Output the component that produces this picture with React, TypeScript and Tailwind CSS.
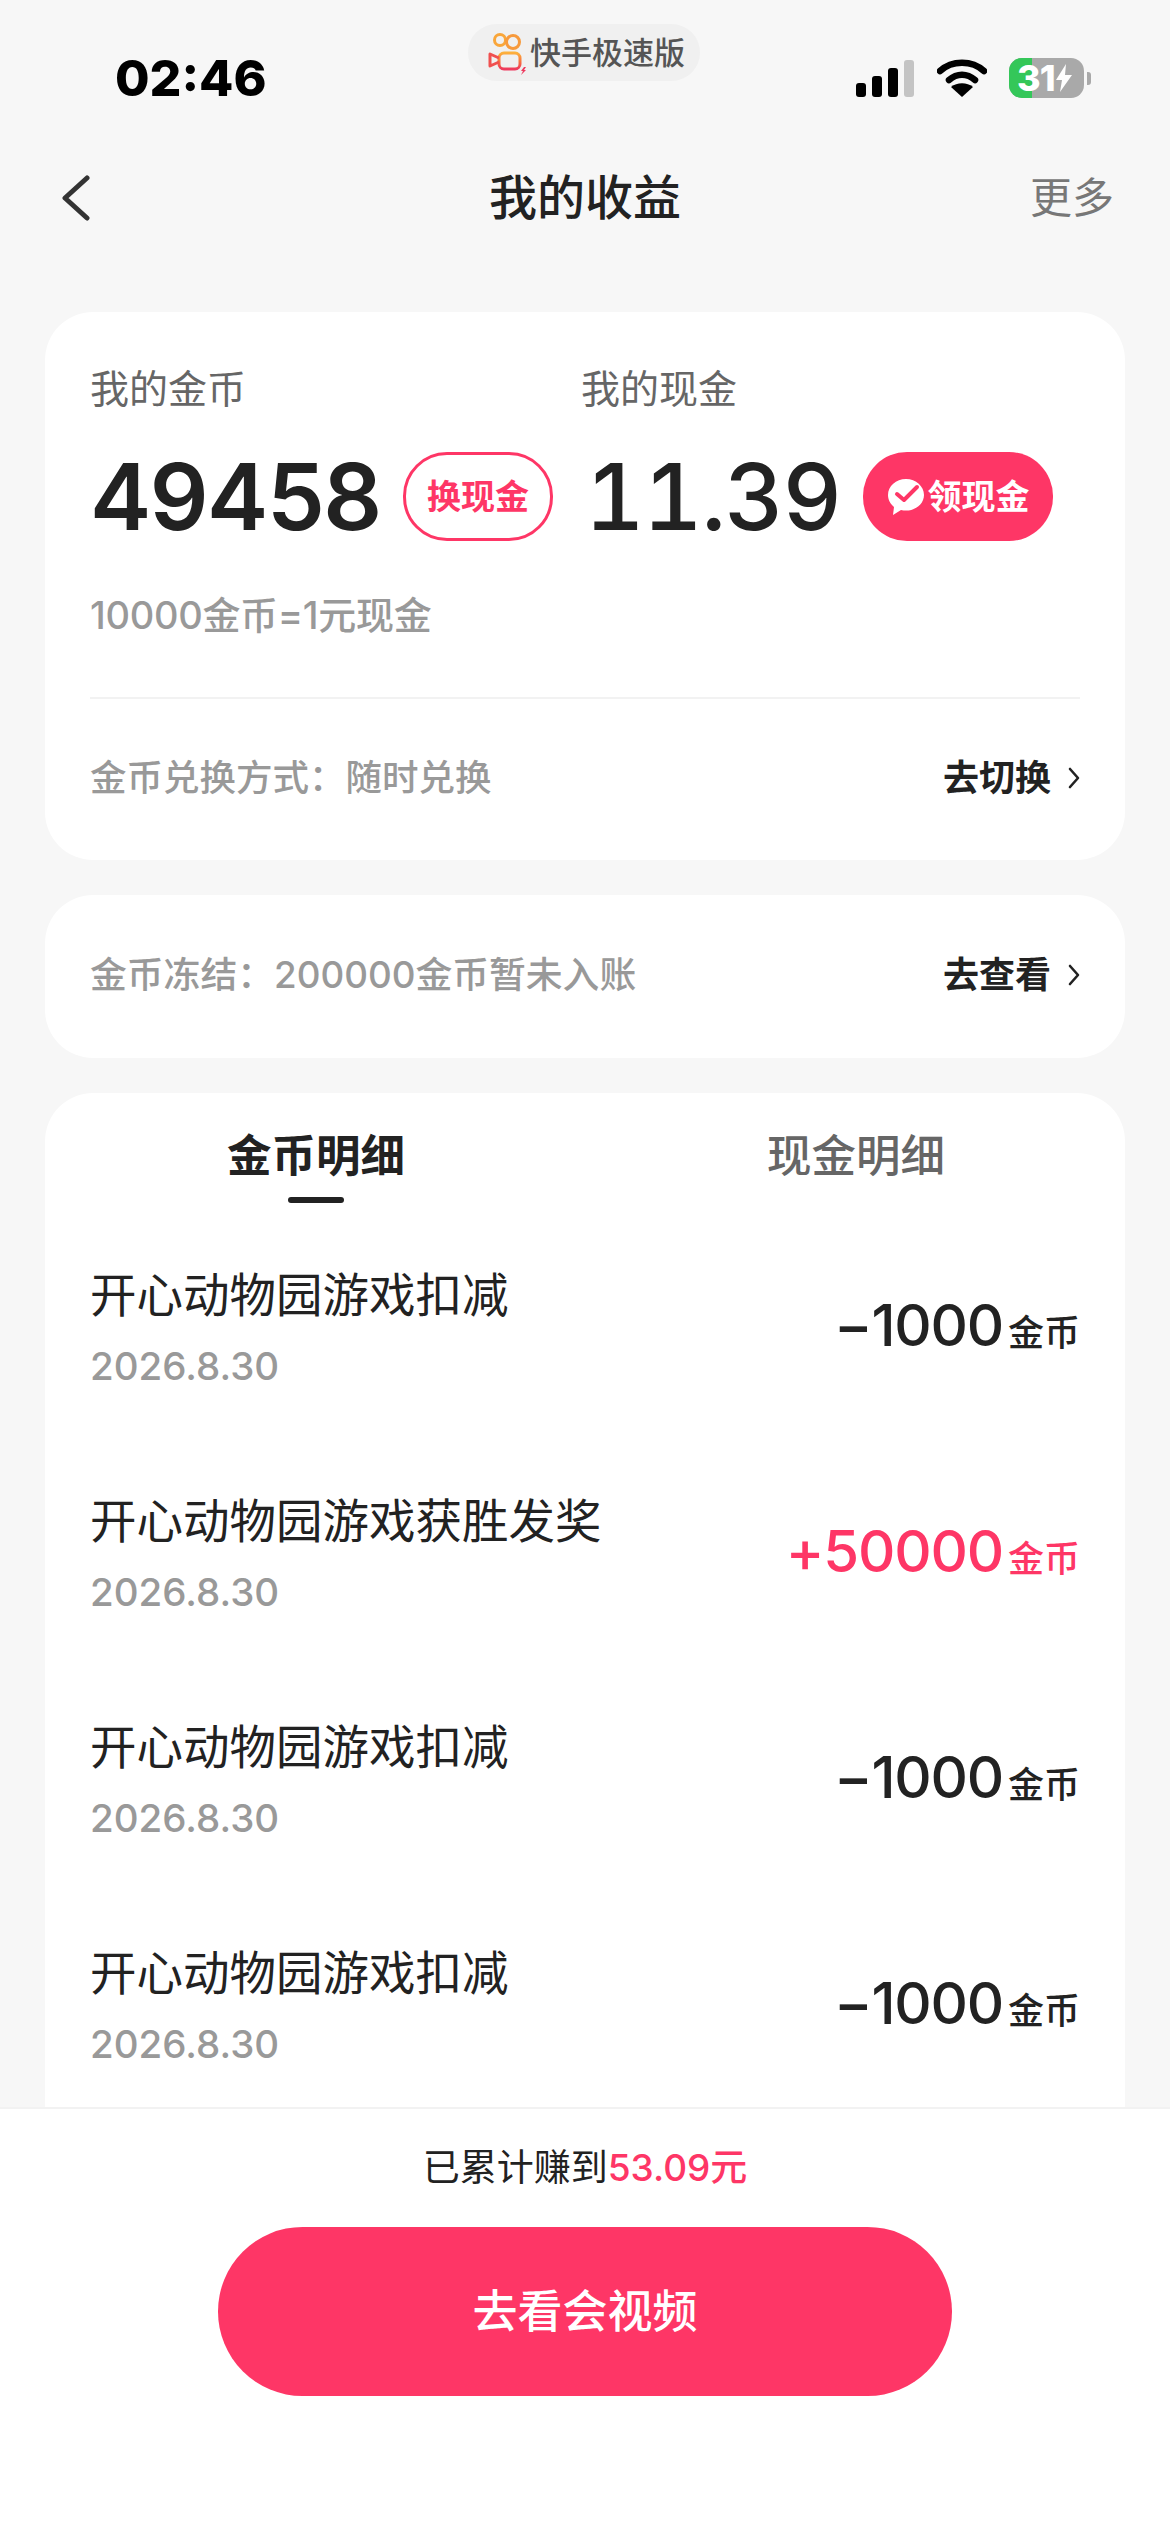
const records = [
  { title: '开心动物园游戏扣减', date: '2026.8.30', amount: '−1000', plus: false },
  { title: '开心动物园游戏获胜发奖', date: '2026.8.30', amount: '+50000', plus: true },
  { title: '开心动物园游戏扣减', date: '2026.8.30', amount: '−1000', plus: false },
  { title: '开心动物园游戏扣减', date: '2026.8.30', amount: '−1000', plus: false },
];

function Chevron() {
  return (
    <svg width="12" height="22" viewBox="0 0 12 22" fill="none" className="ml-[17px]">
      <path d="M2 2l8 9-8 9" stroke="#222" strokeWidth="2.6" strokeLinecap="round" strokeLinejoin="round" />
    </svg>
  );
}

function KwaiLogo() {
  return (
    <svg width="40" height="44" viewBox="0 0 40 44" fill="none" className="shrink-0">
      <defs>
        <linearGradient id="kwai" x1="0" y1="0" x2="0" y2="1">
          <stop offset="0" stopColor="#fcb03c" />
          <stop offset="0.55" stopColor="#f8703f" />
          <stop offset="1" stopColor="#ee3a5e" />
        </linearGradient>
      </defs>
      <circle cx="13" cy="9" r="5.5" stroke="#f9a63a" strokeWidth="3" />
      <circle cx="26" cy="11" r="6.5" stroke="#f79a3c" strokeWidth="3" />
      <rect x="12" y="22" width="21" height="16" rx="5" stroke="url(#kwai)" strokeWidth="3" />
      <path d="M12 27l-9-4v12l9-4" stroke="#f0504f" strokeWidth="3" strokeLinejoin="round" />
      <path d="M37 36l-3 4h2l-2 4 5-5h-2l2-3z" fill="#ee3a5e" />
    </svg>
  );
}

function StatusIcons() {
  return (
    <div className="flex items-center">
      <div className="flex items-end gap-[6px] h-[38px]">
        <div className="w-[10px] h-[14px] rounded-[3px] bg-black" />
        <div className="w-[10px] h-[21px] rounded-[3px] bg-black" />
        <div className="w-[10px] h-[29px] rounded-[3px] bg-black" />
        <div className="w-[10px] h-[37px] rounded-[3px] bg-[#c4c4c4]" />
      </div>
      <svg width="50" height="38" viewBox="0 0 50 38" fill="none" className="ml-[23px]">
        <path d="M3 12C15 1 35 1 47 12" stroke="#000" strokeWidth="6.5" strokeLinecap="round" />
        <path d="M12 21c8-7 18-7 26 0" stroke="#000" strokeWidth="6.5" strokeLinecap="round" />
        <path d="M25 38L14 28c6-5 16-5 22 0L25 38z" fill="#000" />
      </svg>
      <div className="relative ml-[22px] w-[75px] h-[40px] rounded-[13px] bg-[#a9a9a9] flex items-center">
        <div className="absolute left-0 top-0 h-full w-[23px] rounded-l-[13px] bg-[#34c759]" />
        <span className="relative ml-[8px] text-[36px] leading-[40px] font-extrabold text-white tracking-[-1px]">31</span>
        <svg width="16" height="28" viewBox="0 0 16 28" className="relative ml-[1px]">
          <path d="M10 0L0 16h6l-2 12L16 11h-7l1-11z" fill="#fff" />
        </svg>
      </div>
      <div className="ml-[3px] w-[4px] h-[13px] rounded-r-[3px] bg-[#a9a9a9]" />
    </div>
  );
}

export default function App() {
  return (
    <div className="w-[1170px] h-[2532px] overflow-hidden flex flex-col bg-[#f7f7f7] font-['Inter','Noto_Sans_CJK_SC',sans-serif] text-[#222]">
      <div className="relative h-[156px] shrink-0 flex items-center justify-between pl-[115px] pr-[79px]">
        <span className="text-[50px] leading-[60px] font-extrabold text-black">02:46</span>
        <div className="absolute left-[468px] top-[24px] w-[232px] h-[57px] rounded-full bg-[#f0f0f0] flex items-center pl-[19px]">
          <KwaiLogo />
          <span className="ml-[3px] text-[31px] leading-[44px] font-medium text-[#555]">快手极速版</span>
        </div>
        <StatusIcons />
      </div>

      <div className="h-[84px] shrink-0 flex items-center justify-between pl-[62px] pr-[56px] relative">
        <svg width="28" height="46" viewBox="0 0 28 46" fill="none">
          <path d="M25 3L3 23l22 20" stroke="#333" strokeWidth="5" strokeLinecap="round" strokeLinejoin="round" />
        </svg>
        <span className="absolute left-0 right-0 text-center text-[48px] leading-[60px] font-medium">我的收益</span>
        <span className="text-[42px] leading-[50px] text-[#777]">更多</span>
      </div>

      <div className="flex-1 min-h-0 overflow-hidden pt-[72px] px-[45px] flex flex-col gap-[35px]">
        <div className="h-[548px] shrink-0 rounded-[48px] bg-white px-[45px] pt-[55px]">
          <div className="flex text-[39px] leading-[44px] text-[#666]">
            <span className="w-[491px]">我的金币</span>
            <span>我的现金</span>
          </div>
          <div className="flex items-center mt-[41px] h-[89px]">
            <span className="w-[313px] shrink-0 text-[92px] leading-[100px] font-semibold tracking-[-1.5px]">49458</span>
            <div className="w-[150px] h-[89px] shrink-0 rounded-[44px] border-[3px] border-[#fe3666] flex items-center justify-center text-[34px] font-bold text-[#fe3666]">
              换现金
            </div>
            <span className="ml-[32px] w-[278px] shrink-0 text-[92px] leading-[100px] font-medium tabular-nums tracking-[-1.5px]">11.39</span>
            <div className="w-[190px] h-[89px] shrink-0 rounded-[44px] bg-[#fe3666] flex items-center justify-center text-[34px] font-bold text-white">
              <svg width="38" height="38" viewBox="0 0 38 38" className="mr-[3px]">
                <path d="M19 1C9 1 1 8 1 17c0 5 2.500 9 6 12l-1 8 8-5c1.600.400 3.300.600 5 .600 10 0 18-7 18-15.600S29 1 19 1z" fill="#fff" />
                <path d="M10 16l7 6L30 9" stroke="#fe3666" strokeWidth="4" fill="none" strokeLinecap="round" strokeLinejoin="round" />
              </svg>
              领现金
            </div>
          </div>
          <div className="mt-[52px] text-[38px] leading-[44px] font-medium text-[#999] tracking-[-0.3px]">10000金币=1元现金</div>
          <div className="mt-[60px] h-[2px] bg-[#f2f2f2]" />
          <div className="mt-[57px] flex items-center justify-between text-[36px] leading-[44px]">
            <span className="text-[36.5px] font-medium text-[#999]">金币兑换方式：随时兑换</span>
            <span className="flex items-center font-bold">去切换<Chevron /></span>
          </div>
        </div>

        <div className="h-[163px] shrink-0 rounded-[48px] bg-white px-[45px] pb-[4px] flex items-center justify-between text-[36px] leading-[44px]">
          <span className="text-[36.8px] font-medium text-[#999]">金币冻结：200000金币暂未入账</span>
          <span className="flex items-center font-bold text-[#222]">去查看<Chevron /></span>
        </div>

        <div className="flex-1 rounded-t-[48px] bg-white">
          <div className="flex h-[110px] pt-[38px] text-[44.5px] leading-[50px]">
            <div className="w-[542px] flex flex-col items-center">
              <span className="font-bold">金币明细</span>
              <div className="mt-[16px] w-[56px] h-[6px] rounded-full bg-[#222]" />
            </div>
            <span className="ml-[180px] font-medium text-[#666]">现金明细</span>
          </div>
          <div className="px-[45px]">
            {records.map((r, i) => (
              <div key={i} className="h-[226px] pt-[66px] flex justify-between">
                <div>
                  <div className="text-[46.5px] leading-[52px]">{r.title}</div>
                  <div className="mt-[23px] text-[38.5px] leading-[44px] font-medium text-[#999]">{r.date}</div>
                </div>
                <div className={`flex items-baseline mt-[22px] h-[68px] ${r.plus ? 'text-[#fe3666]' : 'text-[#222]'}`}>
                  <span className="text-[58px] leading-[68px] font-medium tracking-[-1.2px]">{r.amount}</span>
                  <span className="ml-[5px] text-[36px] leading-[44px] font-medium">金币</span>
                </div>
              </div>
            ))}
          </div>
        </div>
      </div>

      <div className="h-[425px] shrink-0 bg-white border-t-2 border-[#f2f2f2] flex flex-col items-center pt-[38px]">
        <div className="text-[37px] leading-[42px]">
          已累计赚到<span className="font-medium text-[#fe3666]">53.09元</span>
        </div>
        <div className="mt-[38px] w-[734px] h-[169px] rounded-full bg-[#fe3666] flex items-center justify-center text-[45px] font-medium text-white">
          去看会视频
        </div>
      </div>
    </div>
  );
}
